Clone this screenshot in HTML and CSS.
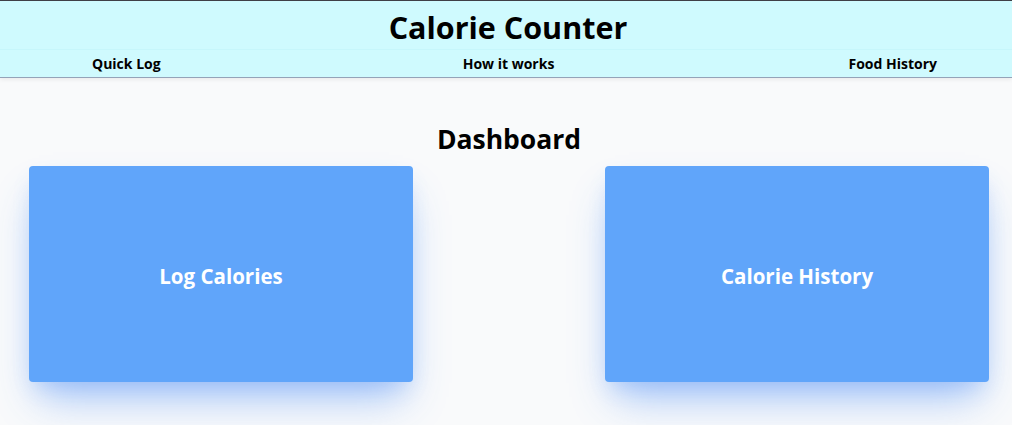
FILE: index.html
```html
<!DOCTYPE html>
<html lang="en">
<head>
<meta charset="utf-8">
<title>Calorie Counter</title>
<link rel="stylesheet" href="styles.css">
</head>
<body>
<header class="site-header">
  <h1 class="site-title">Calorie Counter</h1>
  <nav class="site-nav">
    <a class="nav-link" href="#">Quick Log</a>
    <a class="nav-link" href="#">How it works</a>
    <a class="nav-link" href="#">Food History</a>
  </nav>
</header>
<main class="dashboard">
  <h2 class="dashboard-title">Dashboard</h2>
  <div class="card-row">
    <a class="card" href="#">Log Calories</a>
    <a class="card" href="#">Calorie History</a>
  </div>
</main>
</body>
</html>
```
FILE: styles.css
```css
* { box-sizing: border-box; }
html, body { margin: 0; padding: 0; }
body {
  background: #f9fafb;
  font-family: "Open Sans", "Noto Sans", "Liberation Sans", sans-serif;
  color: #000;
  height: 425px;
  overflow: hidden;
}
.site-header {
  background: #cffafe;
  border-top: 1px solid #3f3f46;
  border-bottom: 1px solid #94a3b8;
  box-shadow: 0 2px 4px rgba(0,0,0,0.06);
}
.site-title {
  margin: 0;
  height: 49px;
  display: flex;
  align-items: center;
  justify-content: center;
  font-size: 30.5px;
  font-weight: 700;
  padding: 3px 0 0 4px;
  border-bottom: 1px solid #c6f6fb;
}
.site-nav {
  height: 27px;
  display: flex;
  align-items: center;
  justify-content: space-between;
  padding: 0 75px 0 92px;
}
.nav-link {
  color: #000;
  text-decoration: none;
  font-size: 14px;
  font-weight: 700;
}
.nav-link:nth-child(2) { margin-left: 8px; }
.dashboard {
  padding-top: 42px;
}
.dashboard-title {
  margin: 0;
  text-align: center;
  font-size: 26.5px;
  font-weight: 700;
  line-height: 38px;
  height: 46px;
  padding-left: 6px;
}
.card-row {
  display: flex;
  justify-content: space-between;
  padding: 0 23px 0 29px;
}
.card {
  width: 384px;
  height: 216px;
  padding-top: 3px;
  background: #60a5fa;
  border-radius: 4px;
  display: flex;
  align-items: center;
  justify-content: center;
  color: #fff;
  text-decoration: none;
  font-size: 20.5px;
  font-weight: 700;
  box-shadow: 0 25px 40px -10px rgba(59,130,246,0.45), 0 10px 20px -5px rgba(59,130,246,0.2);
}
```
